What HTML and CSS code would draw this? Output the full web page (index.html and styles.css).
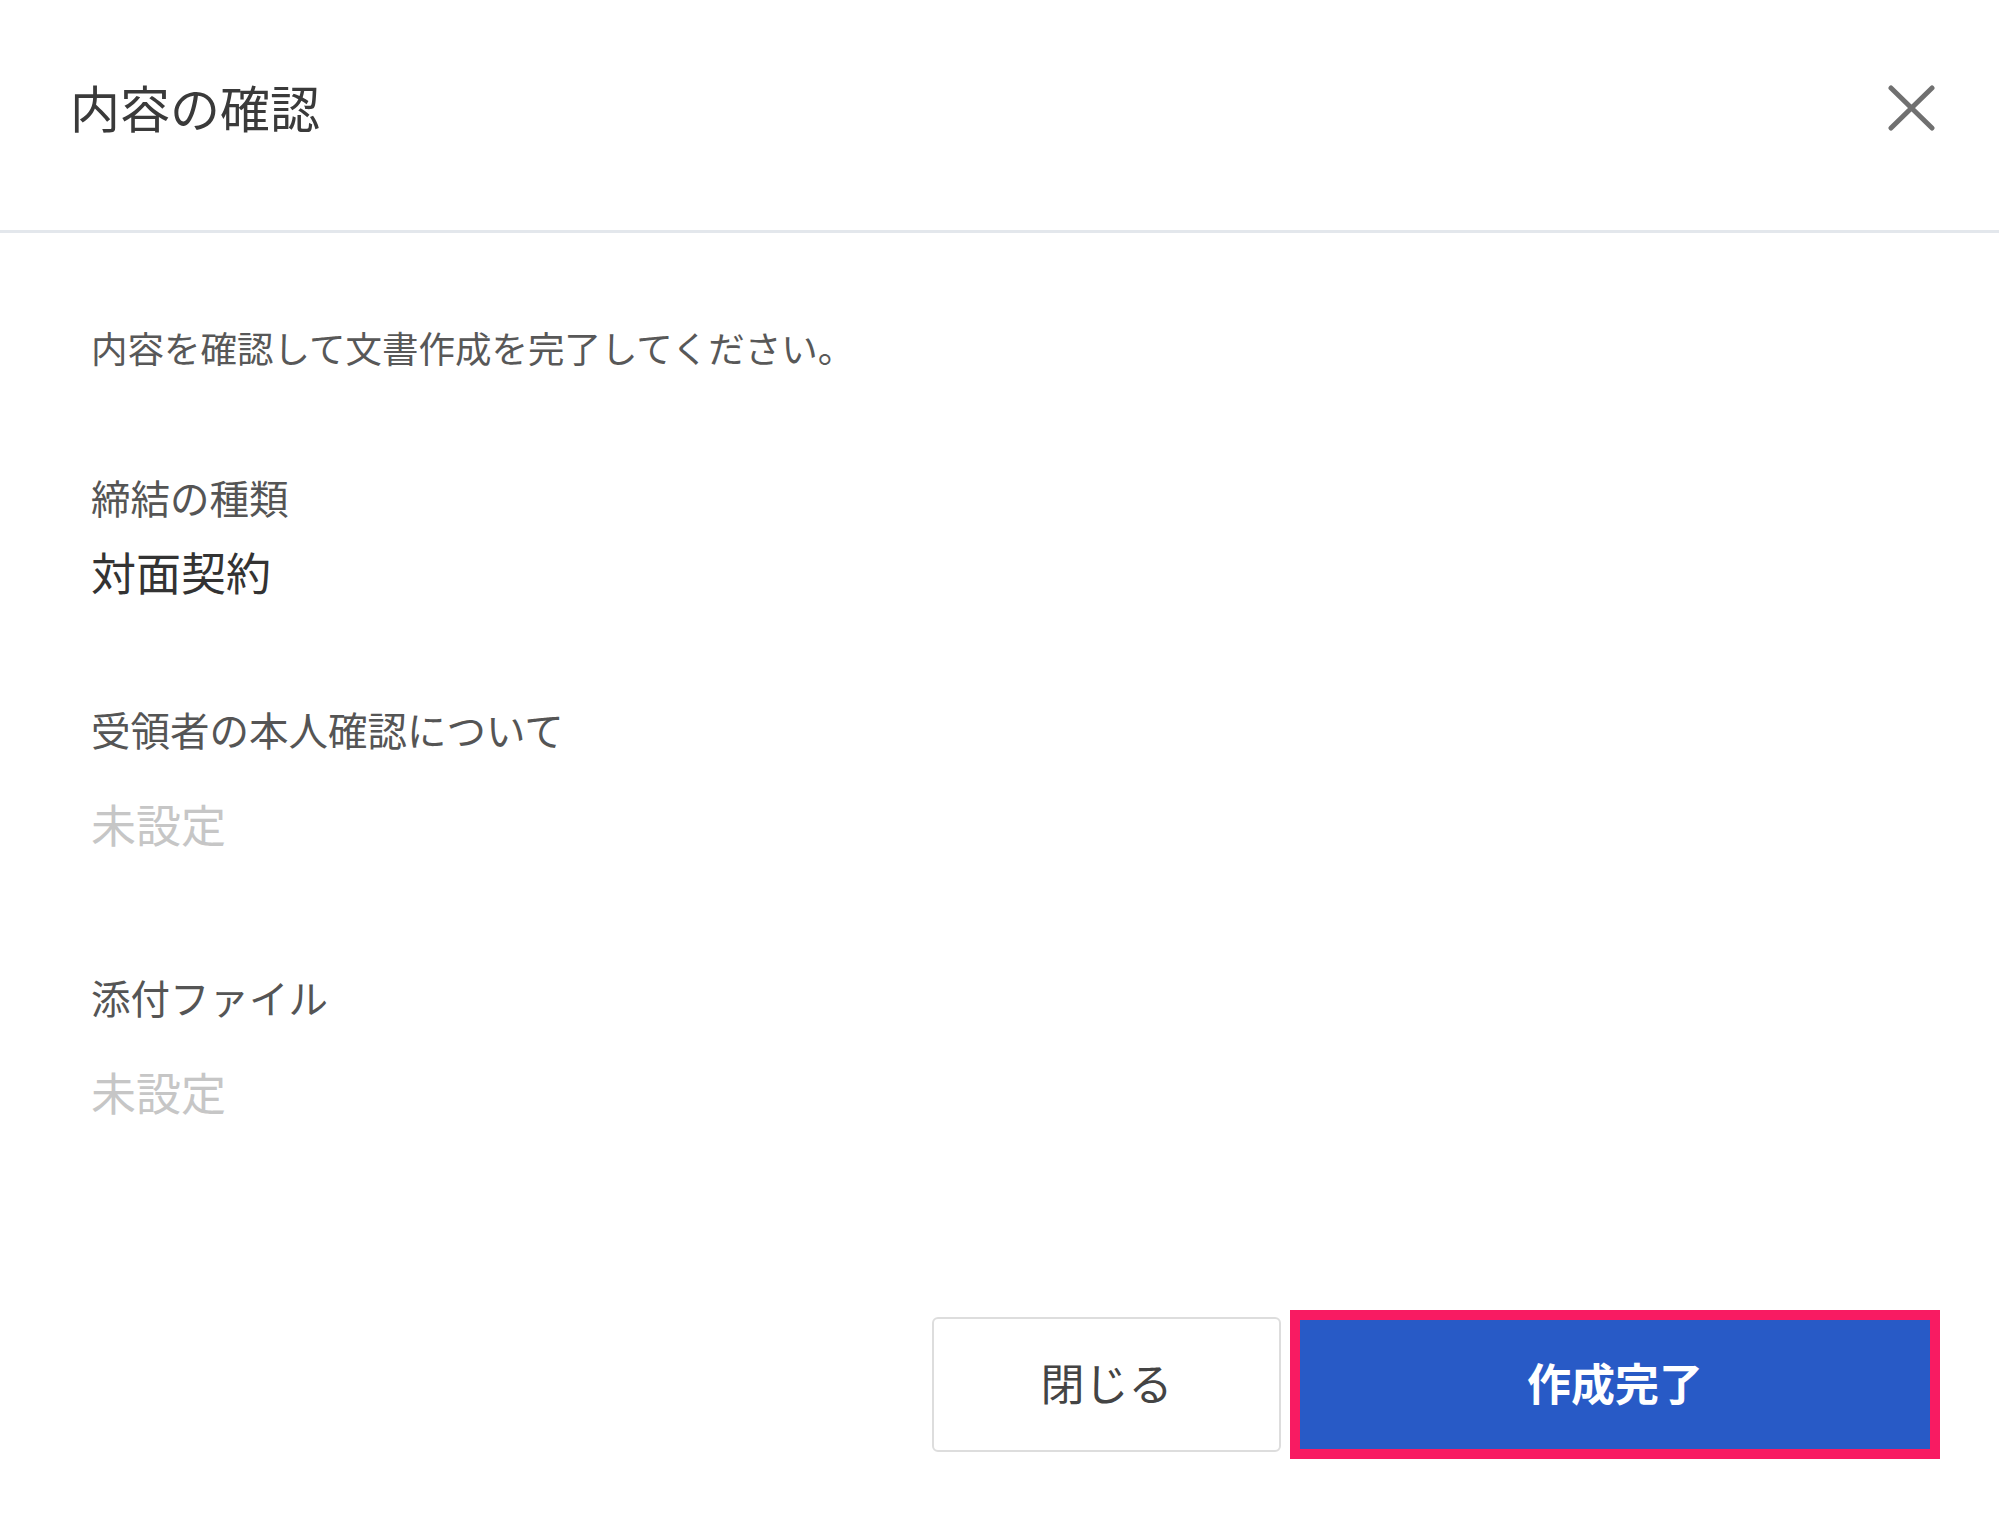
FILE: index.html
```html
<!DOCTYPE html>
<html lang="ja">
<head>
<meta charset="utf-8">
<title>内容の確認</title>
<link rel="stylesheet" href="styles.css">
</head>
<body>
<div class="dialog">
  <header class="dialog-header">
    <h1 class="dialog-title">内容の確認</h1>
    <button class="close-btn" aria-label="閉じる">
      <svg width="47" height="46" viewBox="0 0 47 46" aria-hidden="true">
        <path d="M3 3 L44 43 M44 3 L3 43" stroke="#707070" stroke-width="5" stroke-linecap="round" fill="none"/>
      </svg>
    </button>
  </header>
  <main class="dialog-body">
    <p class="intro">内容を確認して文書作成を完了してください。</p>
    <section class="field">
      <div class="field-label">締結の種類</div>
      <div class="field-value">対面契約</div>
    </section>
    <section class="field">
      <div class="field-label">受領者の本人確認について</div>
      <div class="field-value empty">未設定</div>
    </section>
    <section class="field">
      <div class="field-label">添付ファイル</div>
      <div class="field-value empty">未設定</div>
    </section>
  </main>
  <footer class="dialog-footer">
    <button class="btn btn-secondary">閉じる</button>
    <button class="btn btn-primary">作成完了</button>
  </footer>
</div>
</body>
</html>
```
FILE: styles.css
```css
* { box-sizing: border-box; }
html, body {
  margin: 0;
  padding: 0;
  background: #ffffff;
}
body {
  font-family: "Noto Sans CJK JP", "Noto Sans", sans-serif;
  color: #333333;
}
.dialog {
  width: 1999px;
  height: 1522px;
  display: flex;
  flex-direction: column;
}
.dialog-header {
  height: 233px;
  display: flex;
  align-items: flex-start;
  justify-content: space-between;
  padding: 81px 64px 0 70px;
  border-bottom: 3px solid #e3e7ec;
}
.dialog-title {
  margin: 0;
  font-size: 50px;
  line-height: 50px;
  font-weight: 400;
  color: #3a3a3a;
}
.close-btn {
  margin: 4px 0 0 0;
  padding: 0;
  border: 0;
  background: transparent;
  width: 47px;
  height: 46px;
  display: block;
  cursor: pointer;
}
.close-btn svg { display: block; }
.dialog-body {
  padding: 97px 90px 0 91px;
  display: flex;
  flex-direction: column;
  gap: 115px;
}
.intro {
  margin: 0 0 -4px 0;
  font-size: 36.5px;
  line-height: 36px;
  color: #585858;
}
.field {
  display: flex;
  flex-direction: column;
}
.field-label {
  font-size: 39.5px;
  line-height: 39px;
  color: #555555;
}
.field-value {
  margin-top: 34px;
  font-size: 45px;
  line-height: 44px;
  color: #333333;
}
.field-value.empty {
  margin-top: 54px;
  margin-bottom: 16px;
  color: #c6c6c6;
}
.dialog-footer {
  margin-top: auto;
  padding: 0 59px 63px 0;
  display: flex;
  justify-content: flex-end;
  align-items: center;
  gap: 9px;
}
.btn {
  font-family: "Noto Sans CJK JP", "Noto Sans", sans-serif;
  font-size: 44px;
  line-height: 44px;
  display: flex;
  align-items: center;
  justify-content: center;
  cursor: pointer;
  padding: 0 0 5px 0;
}
.btn-secondary {
  width: 349px;
  height: 135px;
  background: #ffffff;
  border: 2px solid #dddddd;
  border-radius: 6px;
  color: #444444;
  font-weight: 400;
}
.btn-primary {
  width: 650px;
  height: 149px;
  background: #285ac6;
  border: 10px solid #f81b62;
  border-radius: 0;
  color: #ffffff;
  font-weight: 700;
}
```
